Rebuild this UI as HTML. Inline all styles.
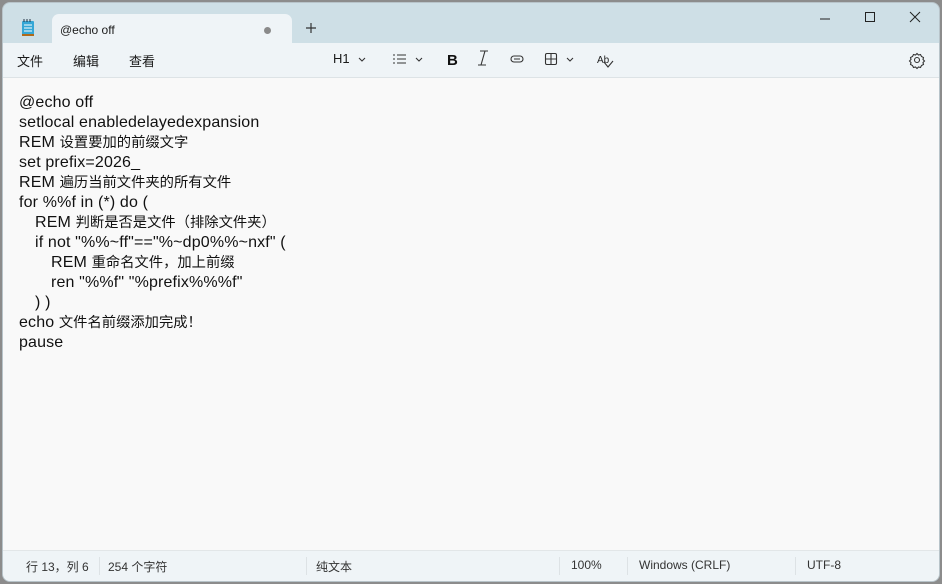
<!DOCTYPE html>
<html><head><meta charset="utf-8"><style>
*{margin:0;padding:0;box-sizing:border-box}
body{width:942px;height:584px;background:#8c8c8c;position:relative;overflow:hidden;font-family:"Liberation Sans","Noto Sans CJK SC",sans-serif;}
.win{position:absolute;left:2px;top:2px;width:938px;height:580px;border-radius:8px;background:#cedfe6;overflow:hidden;border:1px solid #b8c4ca}
.tab{position:absolute;left:49px;top:11px;width:240px;height:32px;background:#eff4f7;border-radius:7px 7px 0 0}
.tab span{position:absolute;left:8px;top:9px;font-size:12px;color:#1a1a1a}
.dot{position:absolute;left:212px;top:13px;width:7px;height:7px;border-radius:50%;background:#8a8a8a}
.menu{position:absolute;left:0;top:40px;width:100%;height:35px;background:#eff4f7;border-bottom:1px solid #dde3e6}
.menu .m{position:absolute;top:8px;font-size:13px;color:#1a1a1a}
.ed{position:absolute;left:0;top:75px;width:100%;height:472px;background:#f9f9f9}
.txt{position:absolute;left:16px;top:15px;font-size:16px;letter-spacing:0.15px;line-height:20px;color:#111;white-space:pre}
.txt div{height:20px}
.c{font-size:14.3px;letter-spacing:0}
.i1{padding-left:16px}.i2{padding-left:32px}
.st{position:absolute;left:0;top:547px;width:100%;height:33px;background:#eff4f7;border-top:1px solid #e2e6e8;font-size:12px;color:#333}
.st span{position:absolute;top:7px}
.sep{position:absolute;top:6px;width:1px;height:18px;background:#dde2e5}
.ic{position:absolute;color:#333}
</style></head><body>
<div class="win">
<svg style="position:absolute;left:18px;top:16px" width="14" height="18" viewBox="0 0 14 18"><rect x="1" y="2" width="12" height="15" rx="1" fill="#35a7d6"/><rect x="1" y="15" width="12" height="2" fill="#b06a1a"/><g stroke="#fff" stroke-width="1"><line x1="3" y1="6" x2="11" y2="6"/><line x1="3" y1="9" x2="11" y2="9"/><line x1="3" y1="12" x2="11" y2="12"/></g><g stroke="#234" stroke-width="1"><line x1="3" y1="0" x2="3" y2="3"/><line x1="6" y1="0" x2="6" y2="3"/><line x1="9" y1="0" x2="9" y2="3"/></g></svg>
<div class="tab"><span>@echo off</span><div class="dot"></div></div>
<svg style="position:absolute;left:302px;top:19px" width="12" height="12"><path d="M6 1V11M1 6H11" stroke="#333" stroke-width="1.2"/></svg>
<svg style="position:absolute;left:814px;top:8px" width="110" height="14" fill="none" stroke="#222" stroke-width="1"><path d="M3 8H13"/><rect x="48.5" y="1.5" width="9" height="9"/><path d="M93 1L103 11M103 1L93 11"/></svg>
<div class="menu">
<span class="m" style="left:14px">文件</span><span class="m" style="left:70px">编辑</span><span class="m" style="left:126px">查看</span>
<span class="m" style="left:330px;font-size:13px">H1</span>
<svg class="ic" style="left:320px;top:-2px" width="620" height="35" fill="none" stroke="#333" stroke-width="1.1">
<path d="M36 17l3 3 3-3"/>
<path d="M70 14h2M70 18h2M70 22h2M74 14h9M74 18h9M74 22h9"/>
<path d="M93 17l3 3 3-3"/>
<text x="124" y="24" font-family="Liberation Sans" font-weight="bold" font-size="15" fill="#111" stroke="none">B</text>
<path d="M157 12h8M155 26h8M162 12l-4 14" transform="translate(0 -2)"/>
<rect x="188" y="15" width="12" height="6" rx="3"/><path d="M191 18h6"/>
<rect x="222.5" y="12.5" width="11" height="11" rx="1.5"/><path d="M228 12.5v11M222.5 18h11"/>
<path d="M244 17l3 3 3-3"/>
<text x="274" y="22" font-family="Liberation Sans" font-size="10" fill="#222" stroke="none">Ab</text><path d="M281 21l4 5 5-6"/>
<circle cx="594" cy="19" r="2.5"/><path d="M594 12.5l1.5 1.5 2-.5 1 2 2 1-.5 2 1.5 1.5-1.5 1.5.5 2-2 1-1 2-2-.5-1.5 1.5-1.5-1.5-2 .5-1-2-2-1 .5-2-1.5-1.5 1.5-1.5-.5-2 2-1 1-2 2 .5z"/>
</svg>
</div>
<div class="ed"><div class="txt"><div>@echo off</div><div>setlocal enabledelayedexpansion</div><div>REM <span class="c">设置要加的前缀文字</span></div><div>set prefix=2026_</div><div>REM <span class="c">遍历当前文件夹的所有文件</span></div><div>for %%f in (*) do (</div><div class="i1">REM <span class="c">判断是否是文件（排除文件夹）</span></div><div class="i1">if not "%%~ff"=="%~dp0%%~nxf" (</div><div class="i2">REM <span class="c">重命名文件，加上前缀</span></div><div class="i2">ren "%%f" "%prefix%%%f"</div><div class="i1">) )</div><div>echo <span class="c">文件名前缀添加完成！</span></div><div>pause</div></div></div>
<div class="st">
<span style="left:23px">行 13，列 6</span><div class="sep" style="left:96px"></div>
<span style="left:105px">254 个字符</span><div class="sep" style="left:303px"></div>
<span style="left:313px">纯文本</span><div class="sep" style="left:556px"></div>
<span style="left:568px">100%</span><div class="sep" style="left:624px"></div>
<span style="left:636px">Windows (CRLF)</span><div class="sep" style="left:792px"></div>
<span style="left:804px">UTF-8</span>
</div>
</div>
</body></html>
